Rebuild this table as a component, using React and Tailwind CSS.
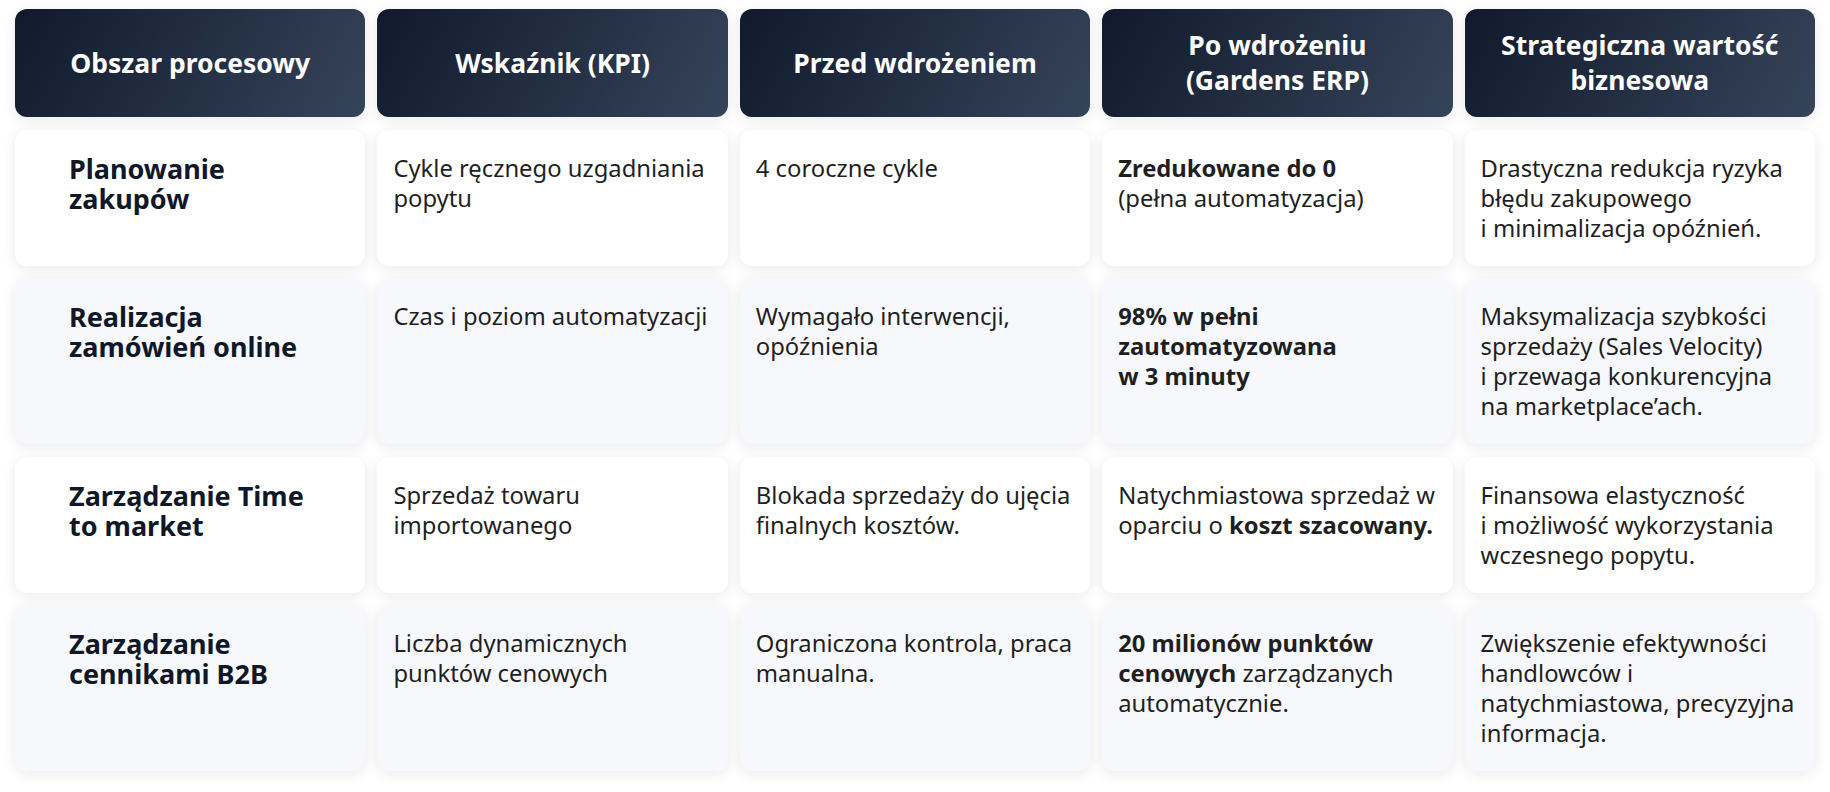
import React from 'react';

const NB = '\u00a0';

const headers = [
  'Obszar procesowy',
  'Wskaźnik (KPI)',
  'Przed wdrożeniem',
  <>Po wdrożeniu<br />(Gardens ERP)</>,
  'Strategiczna wartość biznesowa',
];

const rows = [
  {
    area: 'Planowanie zakupów',
    kpi: 'Cykle ręcznego uzgadniania popytu',
    before: '4 coroczne cykle',
    after: <><b className="font-bold">Zredukowane do 0</b><br />(pełna automatyzacja)</>,
    value: `Drastyczna redukcja ryzyka błędu zakupowego i${NB}minimalizacja opóźnień.`,
  },
  {
    area: 'Realizacja zamówień online',
    kpi: 'Czas i poziom automatyzacji',
    before: 'Wymagało interwencji, opóźnienia',
    after: <b className="font-bold">98% w pełni zautomatyzowana w{NB}3{NB}minuty</b>,
    value: `Maksymalizacja szybkości sprzedaży (Sales Velocity) i${NB}przewaga konkurencyjna na${NB}marketplace’ach.`,
  },
  {
    area: 'Zarządzanie Time to market',
    kpi: 'Sprzedaż towaru importowanego',
    before: 'Blokada sprzedaży do ujęcia finalnych kosztów.',
    after: <>Natychmiastowa sprzedaż w oparciu o <b className="font-bold">koszt szacowany.</b></>,
    value: `Finansowa elastyczność i${NB}możliwość wykorzystania wczesnego popytu.`,
  },
  {
    area: 'Zarządzanie cennikami B2B',
    kpi: 'Liczba dynamicznych punktów cenowych',
    before: 'Ograniczona kontrola, praca manualna.',
    after: <><b className="font-bold">20 milionów punktów cenowych</b> zarządzanych automatycznie.</>,
    value: 'Zwiększenie efektywności handlowców i natychmiastowa, precyzyjna informacja.',
  },
];

const card = 'rounded-xl shadow-[0_3px_14px_rgba(15,23,42,0.09)]';

export default function App() {
  return (
    <div className="min-h-screen bg-white px-[15px] pt-[9px] pb-5 font-['Noto_Sans',sans-serif]">
      <div className="grid grid-cols-5 gap-x-3 gap-y-[12.5px]">
        {headers.map((h, i) => (
          <div
            key={i}
            className={`${card} flex items-center justify-center bg-linear-120 from-[#111a2c] to-[#36445a] px-4 py-[19px] text-center text-[26.5px] font-bold leading-[35px] text-white`}
          >
            {h}
          </div>
        ))}

        {rows.map((r, idx) => {
          const bg = idx % 2 === 1 ? 'bg-[#f7f8fc]' : 'bg-white';
          return (
            <React.Fragment key={r.area}>
              <div className={`${card} ${bg} px-[54px] pt-[24px] pb-6 text-[27px] font-bold leading-[30px] text-[#101828]`}>
                {r.area}
              </div>
              {[r.kpi, r.before, r.after, r.value].map((c, j) => (
                <div
                  key={j}
                  className={`${card} ${bg} px-4 py-[23px] text-[23.8px] leading-[30px] text-[#1f1f1f]`}
                >
                  {c}
                </div>
              ))}
            </React.Fragment>
          );
        })}
      </div>
    </div>
  );
}
